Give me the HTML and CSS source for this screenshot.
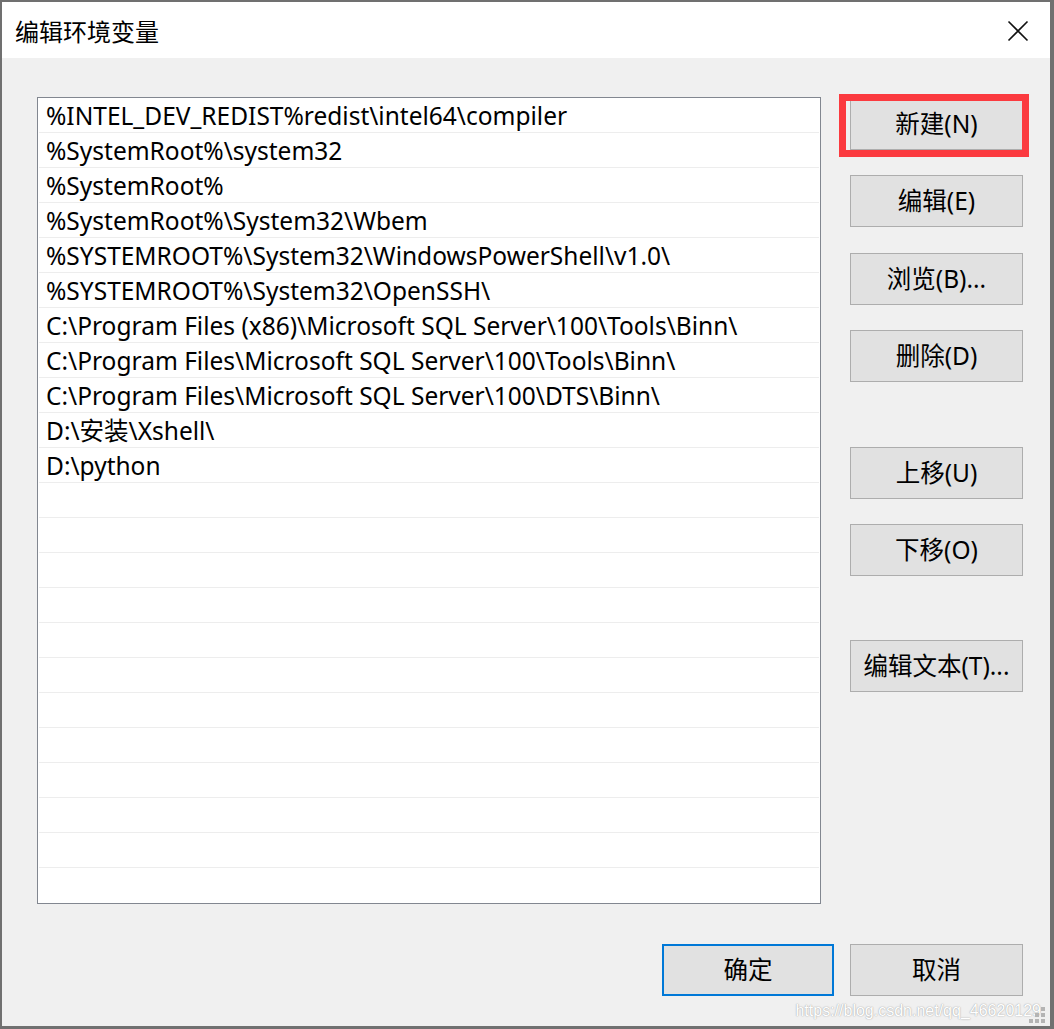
FILE: index.html
```html
<!DOCTYPE html>
<html lang="zh-CN">
<head>
<meta charset="utf-8">
<title>编辑环境变量</title>
<link rel="stylesheet" href="styles.css">
</head>
<body>
<div class="window">
  <div class="titlebar">
    <span class="title">编辑环境变量</span>
    <span class="close">
      <svg width="22" height="22" viewBox="0 0 22 22"><path d="M1.5 1.5 L20.5 20.5 M20.5 1.5 L1.5 20.5" stroke="#111" stroke-width="1.6" fill="none"/></svg>
    </span>
  </div>
  <div class="content">
    <div class="main">
      <div class="listbox">
        <div class="row">%INTEL_DEV_REDIST%redist\intel64\compiler</div>
        <div class="row">%SystemRoot%\system32</div>
        <div class="row">%SystemRoot%</div>
        <div class="row">%SystemRoot%\System32\Wbem</div>
        <div class="row">%SYSTEMROOT%\System32\WindowsPowerShell\v1.0\</div>
        <div class="row">%SYSTEMROOT%\System32\OpenSSH\</div>
        <div class="row">C:\Program Files (x86)\Microsoft SQL Server\100\Tools\Binn\</div>
        <div class="row">C:\Program Files\Microsoft SQL Server\100\Tools\Binn\</div>
        <div class="row">C:\Program Files\Microsoft SQL Server\100\DTS\Binn\</div>
        <div class="row">D:\安装\Xshell\</div>
        <div class="row">D:\python</div>
        <div class="row"></div>
        <div class="row"></div>
        <div class="row"></div>
        <div class="row"></div>
        <div class="row"></div>
        <div class="row"></div>
        <div class="row"></div>
        <div class="row"></div>
        <div class="row"></div>
        <div class="row"></div>
        <div class="row"></div>
        <div class="row last"></div>
      </div>
      <div class="side">
        <div class="btn-wrap">
          <button class="btn">新建(N)</button>
          <span class="highlight"></span>
        </div>
        <button class="btn gap">编辑(E)</button>
        <button class="btn gap gap1">浏览(B)...</button>
        <button class="btn gap">删除(D)</button>
        <button class="btn gap-big">上移(U)</button>
        <button class="btn gap">下移(O)</button>
        <button class="btn gap-big gap-big2">编辑文本(T)...</button>
      </div>
    </div>
    <div class="footer">
      <button class="btn primary">确定</button>
      <button class="btn">取消</button>
    </div>
    <span class="watermark">https://blog.csdn.net/qq_46620129</span>
    <svg class="grip" width="16" height="16" viewBox="0 0 16 16">
      <rect x="12" y="0" width="4" height="4" fill="#b4b4b4"/>
      <rect x="6" y="6" width="4" height="4" fill="#b4b4b4"/>
      <rect x="12" y="6" width="4" height="4" fill="#b4b4b4"/>
      <rect x="0" y="12" width="4" height="4" fill="#b4b4b4"/>
      <rect x="6" y="12" width="4" height="4" fill="#b4b4b4"/>
      <rect x="12" y="12" width="4" height="4" fill="#b4b4b4"/>
    </svg>
  </div>
</div>
</body>
</html>
```

FILE: styles.css
```css
* { box-sizing: border-box; }
html, body {
  margin: 0;
  padding: 0;
  background: #6e6e6e;
}
body {
  width: 1054px;
  height: 1029px;
  overflow: hidden;
  font-family: "Noto Sans", "Noto Sans CJK SC", sans-serif;
  color: #000;
}
.window {
  width: 1054px;
  height: 1029px;
  border-style: solid;
  border-color: #707070;
  border-width: 2px 4px 3px 2px;
  display: flex;
  flex-direction: column;
  background: #f0f0f0;
}
.titlebar {
  height: 56px;
  background: #fff;
  display: flex;
  align-items: center;
  justify-content: space-between;
  padding: 0 21px 0 13px;
  flex: none;
}
.title {
  font-size: 24px;
  font-family: "Noto Sans CJK SC", sans-serif;
  line-height: 1;
  margin-top: 1px;
}
.close {
  display: flex;
  width: 22px;
  height: 22px;
  margin-top: 1px;
}
.content {
  flex: 1;
  position: relative;
  padding: 39px 27px 0 35px;
}
.main {
  display: flex;
  justify-content: space-between;
}
.listbox {
  width: 784px;
  height: 807px;
  border: 1px solid #828790;
  background: #fff;
  display: flex;
  flex-direction: column;
}
.row {
  height: 35px;
  flex: none;
  margin: 0 1px;
  border-bottom: 1px solid #ededed;
  padding-left: 7px;
  font-size: 24.5px;
  line-height: 36px;
  white-space: nowrap;
}
.row.last { border-bottom: none; }
.side {
  width: 173px;
  padding-top: 1px;
  display: flex;
  flex-direction: column;
}
.btn {
  width: 173px;
  height: 52px;
  border: 1px solid #adadad;
  background: #e1e1e1;
  font-family: "Noto Sans", "Noto Sans CJK SC", sans-serif;
  font-size: 24.5px;
  line-height: 1;
  color: #000;
  padding: 0;
  flex: none;
}
.gap { margin-top: 25px; }
.gap1 { margin-top: 26px; }
.gap-big { margin-top: 65px; }
.gap-big2 { margin-top: 64px; }
.btn-wrap {
  position: relative;
  width: 173px;
  height: 52px;
}
.highlight {
  position: absolute;
  left: -11px;
  top: -4px;
  width: 190px;
  height: 63px;
  border: 7px solid #fb3a3f;
}
.footer {
  display: flex;
  justify-content: flex-end;
  gap: 16px;
  margin-top: 40px;
}
.footer .btn { width: 173px; }
.btn.primary {
  width: 172px;
  border: 2px solid #0078d7;
}
.watermark {
  position: absolute;
  right: 9px;
  bottom: 6px;
  font-family: "Liberation Sans", Arial, sans-serif;
  font-size: 16px;
  color: #ffffff;
  text-shadow: 0 0 1px #9a9a9a, 0 0 2px #c8c8c8;
}
.grip {
  position: absolute;
  right: 5px;
  bottom: 3px;
}
```
